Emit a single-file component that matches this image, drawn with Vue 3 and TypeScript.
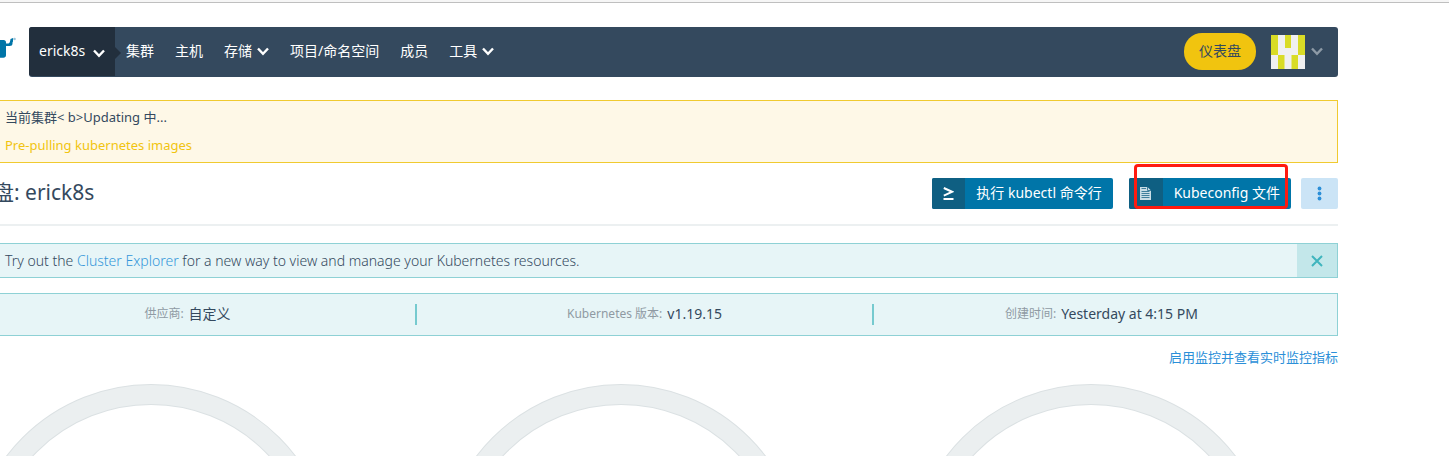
<script setup lang="ts">
interface NavItem {
  label: string
  menu?: boolean
}

interface Stat {
  label: string
  value: string
}

const navItems: NavItem[] = [
  { label: '集群' },
  { label: '主机' },
  { label: '存储', menu: true },
  { label: '项目/命名空间' },
  { label: '成员' },
  { label: '工具', menu: true },
]

const stats: Stat[] = [
  { label: '供应商:', value: '自定义' },
  { label: 'Kubernetes 版本:', value: 'v1.19.15' },
  { label: '创建时间:', value: 'Yesterday at 4:15 PM' },
]

const gauges: string[] = ['CPU', 'Memory', 'Pods']
</script>

<template>
  <div class="page">
    <div class="topline"></div>
    <div class="container">
      <header class="header">
        <a class="logo" href="#" aria-label="Home">
          <svg width="78" height="50" viewBox="0 0 78 50" aria-hidden="true">
            <path d="M20 13h32.500q2.500 0 2.500 2.500v12.500q0 2.700-2.700 2.700H20z" fill="#0075a8" />
            <path d="M54 16.500h3.500q1.500-.5 2-4.500l2.500-1v3.500l-.5 1v1q0 2.500-3 2.500H54z" fill="#0075a8" />
            <circle cx="63.500" cy="12" r="1.300" fill="#9cc5da" />
          </svg>
        </a>
        <nav class="nav">
          <button class="cluster" type="button">
            <span>erick8s</span>
            <svg class="chev low" width="12" height="9" viewBox="0 0 12 9" aria-hidden="true"><path d="M1 1.500L6 6.800L11 1.500" /></svg>
          </button>
          <a v-for="item in navItems" :key="item.label" class="nav-item" href="#">
            <span>{{ item.label }}</span>
            <svg v-if="item.menu" class="chev" width="12" height="9" viewBox="0 0 12 9" aria-hidden="true"><path d="M1 1.500L6 6.800L11 1.500" /></svg>
          </a>
          <span class="grow"></span>
          <button class="dash" type="button">仪表盘</button>
          <button class="user" type="button" aria-label="User menu">
            <svg class="avatar" width="34" height="34" viewBox="0 0 34 34" aria-hidden="true">
              <rect width="34" height="34" fill="#f0f0f0" />
              <path d="M0 0h7v20h-7zM27 0h7v20h-7zM14 0h6v13h-6zM7 20h6.500v14h-6.500zM20.500 20h6.500v14h-6.500z" fill="#d9dc26" />
            </svg>
            <svg class="chev dim" width="12" height="9" viewBox="0 0 12 9" aria-hidden="true"><path d="M1 1.500L6 6.800L11 1.500" /></svg>
          </button>
        </nav>
      </header>

      <section class="notice warn">
        <p>当前集群&lt; b&gt;Updating 中...</p>
        <p class="sub">Pre-pulling kubernetes images</p>
      </section>

      <div class="title">
        <h1>仪表盘: erick8s</h1>
        <div class="actions">
          <button class="btn kubectl" type="button">
            <span class="icon">
              <svg width="11" height="13" viewBox="0 0 11 13" aria-hidden="true"><path d="M.8 1L9 4.800L.8 8.600M.5 12H10.500" fill="none" stroke="#fff" stroke-width="2" /></svg>
            </span>
            <span class="text">执行 kubectl 命令行</span>
          </button>
          <button class="btn config" type="button">
            <span class="icon">
              <svg width="11" height="13" viewBox="0 0 11 13" aria-hidden="true">
                <path d="M0 0h7.500L11 3.500V13H0z" fill="#c9dde6" />
                <path d="M1.500 1.500h4.500M1.500 4.500h8M1.500 6.500h8M1.500 8.500h8M1.500 10.500h8M7.500 0v3.500H11" fill="none" stroke="#3f7f9c" stroke-width="1" />
              </svg>
            </span>
            <span class="text">Kubeconfig 文件</span>
            <span class="mark"></span>
          </button>
          <button class="more" type="button" aria-label="More actions">
            <svg width="5" height="15" viewBox="0 0 5 15" aria-hidden="true"><g fill="#2b8fd8"><circle cx="2.500" cy="2.500" r="1.900" /><circle cx="2.500" cy="7.500" r="1.900" /><circle cx="2.500" cy="12.500" r="1.900" /></g></svg>
          </button>
        </div>
      </div>

      <section class="notice info">
        <p>Try out the <a href="#">Cluster Explorer</a> for a new way to view and manage your Kubernetes resources.</p>
        <button class="close" type="button" aria-label="Close">
          <svg width="12" height="12" viewBox="0 0 12 12" aria-hidden="true"><path d="M1 1L11 11M11 1L1 11" stroke="#3fb5be" stroke-width="2" /></svg>
        </button>
      </section>

      <dl class="stats">
        <div v-for="stat in stats" :key="stat.label" class="stat">
          <dt>{{ stat.label }}</dt>
          <dd>{{ stat.value }}</dd>
        </div>
      </dl>

      <div class="monitor"><a href="#">启用监控并查看实时监控指标</a></div>

      <div class="gauges">
        <svg v-for="gauge in gauges" :key="gauge" width="366" height="366" viewBox="0 0 366 366" aria-hidden="true">
          <circle cx="183" cy="183" r="171.500" fill="none" stroke="#dbe1e3" stroke-width="21" />
          <circle cx="183" cy="183" r="171.500" fill="none" stroke="#ebeff0" stroke-width="19" />
        </svg>
      </div>
    </div>
  </div>
</template>

<style>
body {
  margin: 0;
  background: #fff;
}
</style>

<style scoped>
.page {
  height: 100vh;
  overflow: hidden;
  font-family: "Noto Sans", "Noto Sans CJK SC", sans-serif;
  font-size: 14px;
  line-height: 20px;
  color: #34495e;
}
.page * {
  box-sizing: border-box;
}
button {
  margin: 0;
  padding: 0;
  border: 0;
  font: inherit;
  color: inherit;
  background: none;
  cursor: pointer;
}
a {
  color: #3497da;
  text-decoration: none;
}
p,
h1,
dl,
dd {
  margin: 0;
}
.topline {
  height: 3px;
  background: #f6f6f6;
  border-bottom: 1px solid #bfbfbf;
}
.container {
  margin: 24px 111px 0 -49px;
}
.header {
  display: flex;
}
.logo {
  width: 78px;
  height: 50px;
}
.nav {
  flex: 1;
  display: flex;
  align-items: center;
  height: 50px;
  padding-bottom: 1px;
  background: #34495e;
  border-radius: 3px;
  color: #fff;
}
.cluster {
  position: relative;
  display: flex;
  align-items: center;
  justify-content: space-between;
  width: 86px;
  height: 49px;
  padding: 0 10px 1px;
  background: #222f3d;
  border-radius: 3px 0 0 3px;
}
.cluster::after {
  content: "";
  position: absolute;
  left: 100%;
  top: 20px;
  border: 6px solid transparent;
  border-left-color: #222f3d;
  border-right-width: 0;
}
.chev {
  fill: none;
  stroke: #fff;
  stroke-width: 2.4;
}
.chev.low {
  margin-top: 5px;
}
.chev.dim {
  stroke: #8d9aa6;
}
.nav-item {
  display: flex;
  align-items: center;
  gap: 5px;
  padding: 0 10px 1px 11px;
  color: #fff;
}
.grow {
  flex: 1;
}
.dash {
  height: 37px;
  padding: 0 15px 1px;
  border-radius: 18px;
  background: #f1c40f;
  color: #34495e;
}
.user {
  display: flex;
  align-items: center;
  gap: 6px;
  margin: 0 15px;
}
.avatar {
  margin-top: 1px;
}
.notice {
  border: 1px solid #8ed1d5;
  background: #e7f5f7;
  padding-left: 53px;
}
.warn {
  margin-top: 23px;
  padding-top: 2px;
  padding-bottom: 3px;
  font-size: 13px;
  line-height: 28px;
  border-color: #f0ca30;
  background: #fef8e7;
}
.sub {
  color: #f1c40f;
}
.title {
  display: flex;
  justify-content: space-between;
  align-items: center;
  margin-top: 15px;
  padding-bottom: 15px;
  border-bottom: 2px solid #ecf0f1;
}
h1 {
  font-size: 21px;
  font-weight: 400;
  line-height: 28px;
  padding-bottom: 3px;
}
.actions {
  display: flex;
}
.btn {
  position: relative;
  display: flex;
  height: 31px;
  margin-right: 16px;
  border-radius: 2px;
  background: #0075a8;
  color: #fff;
}
.btn.config {
  margin-right: 10px;
}
.icon {
  display: flex;
  align-items: center;
  justify-content: center;
  width: 33px;
  height: 31px;
  border-radius: 2px 0 0 2px;
  background: #0f5f82;
}
.config .icon {
  width: 34px;
}
.text {
  padding: 0 11px;
  line-height: 30px;
}
.mark {
  position: absolute;
  inset: -14px 3px 0 5px;
  border: 3px solid #ff1a10;
  border-radius: 4px;
}
.more {
  display: flex;
  align-items: center;
  justify-content: center;
  width: 37px;
  height: 31px;
  border-radius: 2px;
  background: #cbe4f6;
}
.info {
  display: flex;
  justify-content: space-between;
  margin-top: 17px;
  font-weight: 300;
  line-height: 33px;
}
.close {
  display: flex;
  align-items: center;
  justify-content: center;
  width: 40px;
  background: #c3e7ea;
}
.stats {
  display: flex;
  margin-top: 15px;
  padding: 10px 8px;
  border: 1px solid #8ed1d5;
  background: #e7f5f7;
}
.stat {
  flex: 1;
  display: flex;
  justify-content: center;
  align-items: center;
  gap: 5px;
  height: 21px;
  padding-bottom: 2px;
}
.stat + .stat {
  border-left: 2px solid #76cacf;
}
dt {
  font-size: 12px;
  color: #8f9aa3;
}
.monitor {
  margin-top: 11px;
  font-size: 13px;
  text-align: right;
}
.monitor a {
  color: #2b8fd8;
}
.gauges {
  display: grid;
  grid-template-columns: repeat(3, 1fr);
  justify-items: center;
  margin: 16px 12px 0 -35px;
}
</style>
